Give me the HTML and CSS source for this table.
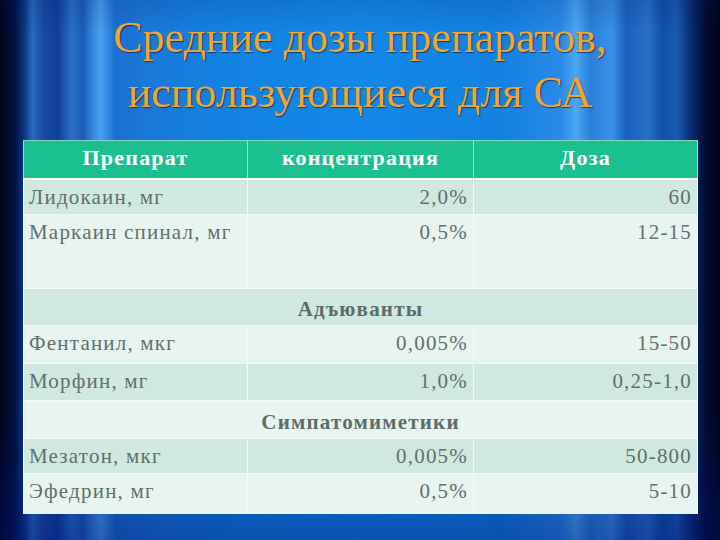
FILE: index.html
```html
<!DOCTYPE html>
<html>
<head>
<meta charset="utf-8">
<title>Средние дозы препаратов</title>
<link rel="stylesheet" href="styles.css">
</head>
<body>
<div class="slide">
  <h1 class="title">Средние дозы препаратов,<br>использующиеся для СА</h1>
  <table class="doses">
    <colgroup><col class="c1"><col class="c2"><col class="c3"></colgroup>
    <thead>
      <tr class="head"><th>Препарат</th><th>концентрация</th><th>Доза</th></tr>
    </thead>
    <tbody>
      <tr class="dark h36"><td>Лидокаин, мг</td><td class="num">2,0%</td><td class="num">60</td></tr>
      <tr class="light h74"><td>Маркаин спинал, мг</td><td class="num">0,5%</td><td class="num">12-15</td></tr>
      <tr class="dark h37 sub"><td colspan="3">Адъюванты</td></tr>
      <tr class="light h38"><td>Фентанил, мкг</td><td class="num">0,005%</td><td class="num">15-50</td></tr>
      <tr class="dark h37"><td>Морфин, мг</td><td class="num">1,0%</td><td class="num">0,25-1,0</td></tr>
      <tr class="light h38 sub"><td colspan="3">Симпатомиметики</td></tr>
      <tr class="dark h35"><td>Мезатон, мкг</td><td class="num">0,005%</td><td class="num">50-800</td></tr>
      <tr class="light h40"><td>Эфедрин, мг</td><td class="num">0,5%</td><td class="num">5-10</td></tr>
    </tbody>
  </table>
</div>
</body>
</html>
```
FILE: styles.css
```css
html, body {
  margin: 0;
  padding: 0;
}
body {
  width: 720px;
  height: 540px;
  overflow: hidden;
  font-family: "Liberation Serif", serif;
}
.slide {
  width: 720px;
  height: 540px;
  box-sizing: border-box;
  padding-top: 10px;
  font-family: "Liberation Serif", serif;
  background:
    linear-gradient(to bottom, rgba(0, 20, 90, 0.15) 0%, rgba(0, 20, 90, 0) 6%, rgba(0, 20, 90, 0) 75%, rgba(0, 20, 110, 0.45) 100%),
    linear-gradient(to right,
      #00051a 0%, #021040 2%, #0a3a8a 3.5%, #2a6ac0 4.5%, #1a4aa0 6%, #0e3f9a 8%,
      #2a70c8 10%, #1a5cb8 11.5%, #3a8ae0 13%, #4aa0f0 14%, #1a70d0 16%, #1a78d8 20%,
      #1282e2 30%, #1288e8 50%, #1282e2 70%, #2a8ae8 78%, #4aa8f5 80%, #2a80d8 82%,
      #3a90e8 85%, #1a60c0 87%, #2a70c8 90%, #1050a8 92%, #1a5ab0 94%, #0a2a70 96%,
      #020c30 98%, #000518 100%);
}
.title {
  margin: 0 0 20px 0;
  font-family: "Liberation Serif", serif;
  font-weight: normal;
  font-size: 44px;
  line-height: 55px;
  text-align: center;
  color: #f2a630;
  text-shadow: 1px 1px 1px rgba(0, 10, 50, 0.6);
}
.doses {
  margin-left: 23px;
  width: 674px;
  border-collapse: collapse;
  table-layout: fixed;
  font-family: "Liberation Serif", serif;
  font-size: 21px;
  letter-spacing: 1.2px;
  color: #61706c;
}
.c1 { width: 224px; }
.c2 { width: 226px; }
.c3 { width: 224px; }
.doses th,
.doses td {
  font-family: "Liberation Serif", serif;
  padding: 3px 5px 0 5px;
  vertical-align: top;
  line-height: 28px;
  border-left: 1px solid #f2f9f7;
  border-right: 1px solid #f2f9f7;
  border-top: 1px solid #f2f9f7;
}
.head th {
  background: #1bc08f;
  color: #ffffff;
  font-size: 22px;
  font-weight: bold;
  text-align: center;
  height: 38px;
  box-sizing: border-box;
  border-top: 1px solid #7fd8bd;
  border-left-color: #8fe0c6;
  border-right-color: #8fe0c6;
  border-bottom: 2px solid #f6fbfa;
  vertical-align: middle;
  padding: 0 6px 2px 6px;
}
.dark td { background: #cfe9e1; }
.light td { background: #e8f4f0; }
.num { text-align: right; }
.sub td {
  text-align: center;
  font-weight: bold;
  vertical-align: middle;
  padding: 4px 0 0 0;
  color: #5e6c68;
}
.h35 td { height: 35px; }
.h36 td { height: 36px; }
.h37 td { height: 37px; }
.h38 td { height: 38px; }
.h40 td { height: 40px; }
.h74 td { height: 74px; }
.doses tbody td { box-sizing: border-box; }
```
